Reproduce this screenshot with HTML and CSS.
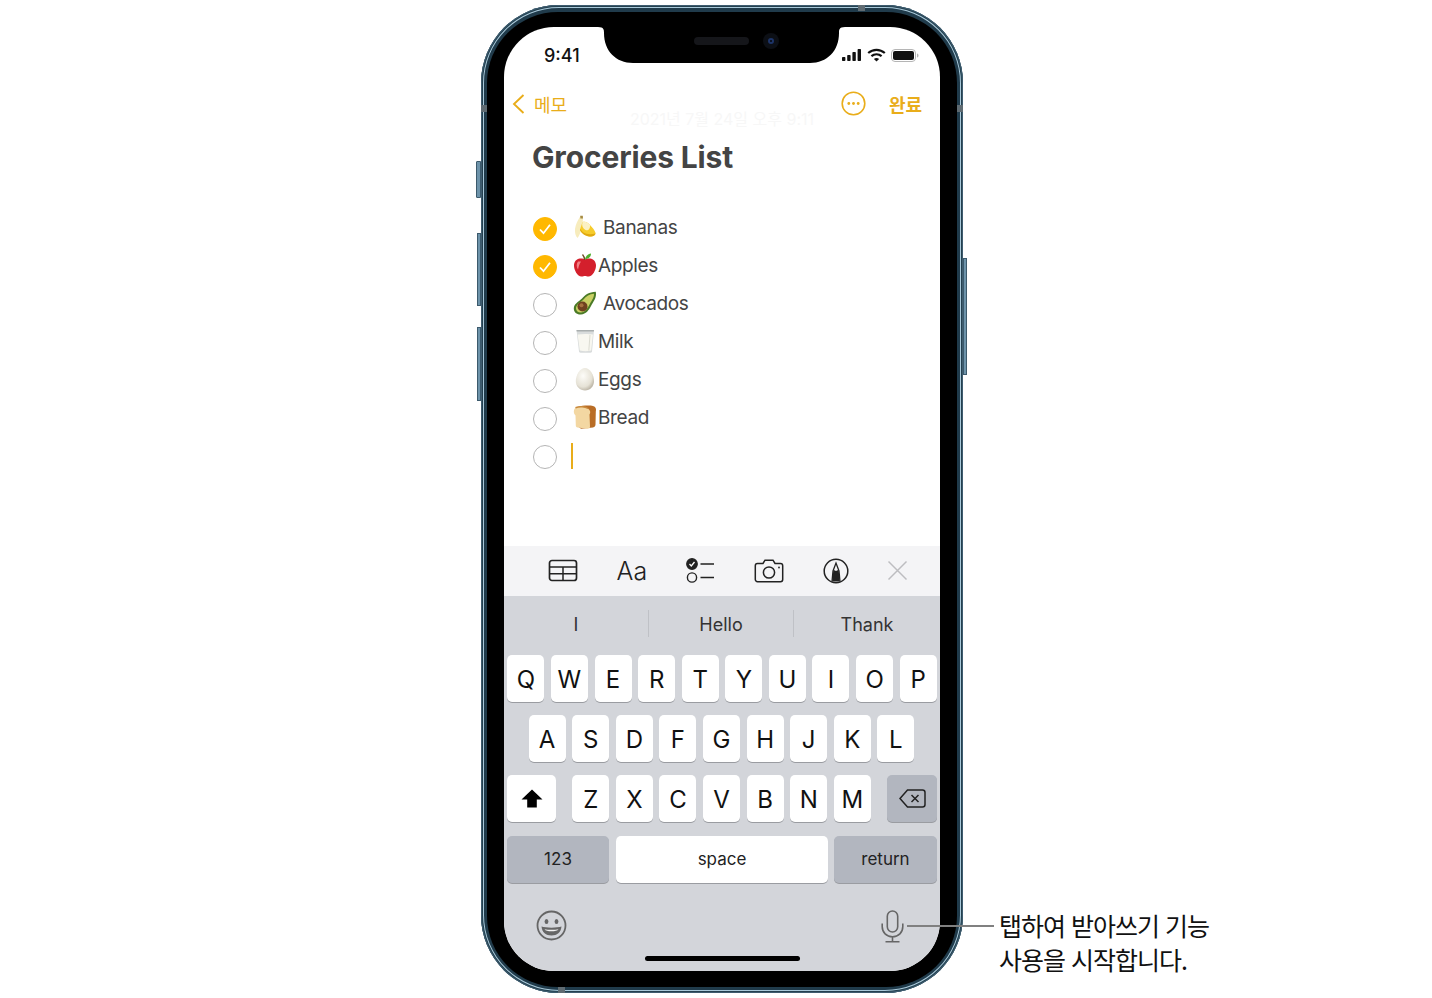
FILE: index.html
```html
<!DOCTYPE html>
<html lang="ko">
<head>
    <title>Groceries List</title>
    <link rel="stylesheet" href="styles.css">
</head>
<body>
<div class="stage">
    <div class="phone">
        <span class="side side-silent"></span>
        <span class="side side-up"></span>
        <span class="side side-down"></span>
        <span class="side side-power"></span>
        <span class="band band-top"></span>
        <span class="band band-bottom"></span>
        <span class="band band-left"></span>
        <span class="band band-right"></span>

        <div class="bezel">
            <div class="screen">
                <svg class="notch" width="247" height="36" viewBox="0 0 247 36">
                    <path d="M0 0H247C241 0 241 3 241 6C241 24 229 36 212 36H35C18 36 6 24 6 6C6 3 6 0 0 0Z" fill="#000"/>
                    <rect x="96" y="10" width="55" height="8" rx="4" fill="#15161a"/>
                    <circle cx="173" cy="14" r="8" fill="#0c0f15"/>
                    <circle cx="173" cy="14" r="3" fill="#1d3468"/>
                    <circle cx="173" cy="14" r="1" fill="#05070c"/>
                </svg>

                <div class="status">
                    <span class="time">9:41</span>
                    <div class="status-icons">
                        <svg width="20" height="12" viewBox="0 0 20 12" fill="#111">
                            <rect x="0" y="8" width="3.4" height="4" rx=".8"/>
                            <rect x="5.2" y="6" width="3.4" height="6" rx=".8"/>
                            <rect x="10.4" y="3" width="3.4" height="9" rx=".8"/>
                            <rect x="15.6" y="0" width="3.4" height="12" rx=".8"/>
                        </svg>
                        <svg width="19" height="14" viewBox="0 0 19 14" fill="none" stroke="#111" stroke-width="2.2">
                            <path d="M1.2 5C6 .7 13 .7 17.8 5"/>
                            <path d="M4.4 8.2C7.4 5.6 11.6 5.6 14.6 8.2"/>
                            <path d="M9.5 13.6L6.9 10.9C8.4 9.7 10.6 9.7 12.1 10.9Z" fill="#111" stroke="none"/>
                        </svg>
                        <svg width="28" height="13" viewBox="0 0 28 13">
                            <rect x=".5" y=".5" width="24" height="12" rx="3.5" fill="none" stroke="#b5b5b5"/>
                            <rect x="2" y="2" width="21" height="9" rx="2" fill="#111"/>
                            <path d="M26 4.5C27 4.8 27.5 5.5 27.5 6.5S27 8.2 26 8.5Z" fill="#b5b5b5"/>
                        </svg>
                    </div>
                </div>

                <div class="nav">
                    <div class="nav-back">
                        <svg width="13" height="20" viewBox="0 0 13 20" fill="none" stroke="#e9ad1a" stroke-width="1.9">
                            <path d="M11.5 1L2 10L11.5 19"/>
                        </svg>
                        <span>메모</span>
                    </div>
                    <div class="nav-actions">
                        <svg width="25" height="25" viewBox="0 0 25 25" fill="none" stroke="#e9ad1a" stroke-width="1.6">
                            <circle cx="12.5" cy="12.5" r="11.3"/>
                            <g fill="#e9ad1a" stroke="none">
                                <circle cx="7.8" cy="12.5" r="1.4"/>
                                <circle cx="12.5" cy="12.5" r="1.4"/>
                                <circle cx="17.2" cy="12.5" r="1.4"/>
                            </g>
                        </svg>
                        <span class="done">완료</span>
                    </div>
                </div>

                <div class="note">
                    <div class="note-date">2021년 7월 24일 오후 9:11</div>
                    <h1>Groceries List</h1>
                    <ul class="checklist">
                        <li>
                            <span class="check on"><svg width="14" height="12" viewBox="0 0 14 12" fill="none" stroke="#fff" stroke-width="1.8"><path d="M2 6.5L5.5 10.2L12 1.8"/></svg></span>
                            <svg class="emoji" viewBox="0 0 24 24">
                                <path d="M7.5 1C5 5 2.5 9 2 14C1.7 18 2.8 21.5 4.5 23C6 21.5 7 18.5 8 15.5C9.5 11 10 6 10 1.5Z" fill="#f7ecbd"/>
                                <path d="M9.5 7C12.5 6 15 7.5 17 10C19.5 12.5 21.5 15 22.5 17.8C22.8 20 20 22 16.5 21.5C12.5 21 8.5 18.5 7 14.5Z" fill="#f6cc2c"/>
                                <path d="M9.5 7C8.5 10.5 9.5 13.5 12.5 15C15 16 17.5 14 17 10C15 7.5 12.5 6 9.5 7Z" fill="#fbf1c4"/>
                                <path d="M7.5 14C9.5 18 14 20.5 22.6 18.5C22 20.5 19.5 22 16.5 21.5C12.5 21 8.5 18.5 7 15Z" fill="#e0a912"/>
                                <path d="M7.2 .8H9.8L10 3.5H7.4Z" fill="#a58a45"/>
                            </svg>
                            <span class="item wide">Bananas</span>
                        </li>
                        <li>
                            <span class="check on"><svg width="14" height="12" viewBox="0 0 14 12" fill="none" stroke="#fff" stroke-width="1.8"><path d="M2 6.5L5.5 10.2L12 1.8"/></svg></span>
                            <svg class="emoji" viewBox="0 0 24 24">
                                <path d="M12 6.5C9 4.5 1.5 4.8 1 12C.8 17 4.5 23.5 8.5 23.5C10 23.5 11 22.9 12 22.9S14 23.5 15.5 23.5C19.5 23.5 23.2 17 23 12C22.5 4.8 15 4.5 12 6.5Z" fill="#d41f2c"/>
                                <path d="M5 8.5C3.3 10.5 3.3 14 5 16.5C5.8 13.5 6.2 11 8 8.5Z" fill="#f17f83"/>
                                <path d="M9.5 1.5C10.8 3 11.5 5 11.8 7" fill="none" stroke="#6e4a22" stroke-width="1.3"/>
                                <path d="M12 6C13 2.5 15.5 .7 18 .5C18 3.5 16 6 12 6Z" fill="#4fae2e"/>
                            </svg>
                            <span class="item">Apples</span>
                        </li>
                        <li>
                            <span class="check"></span>
                            <svg class="emoji" viewBox="0 0 24 24">
                                <path d="M22.8 .8C16 1 12 4 9 7.5C5 11 .8 13 .8 17.5C.8 21.5 4 23.8 8 23.5C13 23.2 16 19 18 15C20 11 24 7 22.8 .8Z" fill="#4a7a26"/>
                                <path d="M21 2.8C16.5 3 13 5.5 10.5 8.5C7 12 3 13.5 3 17.5C3 20 5.5 21.7 8 21.5C12 21.2 14.5 17.5 16.3 14C18 10.5 21.3 7 21 2.8Z" fill="#c9d064"/>
                                <circle cx="9.5" cy="15.5" r="5" fill="#6f4120"/>
                                <circle cx="8.5" cy="14.3" r="2" fill="#a5703f"/>
                            </svg>
                            <span class="item wide">Avocados</span>
                        </li>
                        <li>
                            <span class="check"></span>
                            <svg class="emoji" viewBox="0 0 24 24">
                                <path d="M3.5 1H21L19 22.5C19 23.2 18.5 23.7 17.5 23.7H7.500C6.500 23.7 6 23.2 6 22.5Z" fill="#d9dcdc"/>
                                <path d="M4.600 5.5C9 4.800 15.500 4.800 19.900 5.5L18.200 21.5C14.500 22.5 10.500 22.5 6.800 21.5Z" fill="#f8f7f0"/>
                                <path d="M3.5 1H21L20.800 2.600H3.700Z" fill="#a9aeae"/>
                                <path d="M17 6L15.800 21.5" stroke="#dcdcd2" fill="none"/>
                            </svg>
                            <span class="item">Milk</span>
                        </li>
                        <li>
                            <span class="check"></span>
                            <svg class="emoji" viewBox="0 0 24 24">
                                <defs>
                                    <radialGradient id="eggFill" cx=".4" cy=".35" r=".75">
                                        <stop offset="0" stop-color="#fdfcf8"/>
                                        <stop offset=".65" stop-color="#e6e2d6"/>
                                        <stop offset="1" stop-color="#aca494"/>
                                    </radialGradient>
                                </defs>
                                <path d="M12 1C17 1 21 8 21 14C21 19.5 17 23.5 12 23.5S2.800 19.5 2.800 14C2.800 8 7 1 12 1Z" fill="url(#eggFill)"/>
                            </svg>
                            <span class="item">Eggs</span>
                        </li>
                        <li>
                            <span class="check"></span>
                            <svg class="emoji" viewBox="0 0 24 24">
                                <path d="M5 2C9 .3 17 .3 20 1C22.800 1.700 23.500 4 22.800 6.500L22.500 19.500C22.500 21 21.500 22 20 22.500L8 23.700L3 20Z" fill="#b96d26"/>
                                <path d="M2.500 2.800C6.500 1 12 1.500 15 3.500C17.500 5.300 17.800 7.500 16.500 9.500L17 21.500C17 23 16 23.800 14.500 23.700L4.500 22.500C3.300 22.300 2.800 21.500 2.800 20.500L2.500 10.500C.3 8.500 .3 4.500 2.500 2.800Z" fill="#f3d7a2"/>
                                <path d="M2.500 2.800C6.500 1 12 1.500 15 3.500" fill="none" stroke="#c98a3d" stroke-width="1.500"/>
                            </svg>
                            <span class="item">Bread</span>
                        </li>
                        <li>
                            <span class="check"></span>
                            <span class="caret"></span>
                        </li>
                    </ul>
                </div>

                <div class="toolbar">
                    <span class="tool">
                        <svg width="30" height="23" viewBox="0 0 30 23" fill="none" stroke="#222" stroke-width="1.700">
                            <rect x="1.500" y="1.500" width="27" height="20" rx="2.500"/>
                            <path d="M1.500 8H28.500M1.500 14.800H28.500M15 8V21.500" stroke-width="1.500"/>
                        </svg>
                    </span>
                    <span class="tool tool-text">Aa</span>
                    <span class="tool">
                        <svg width="29" height="25" viewBox="0 0 29 25" fill="none" stroke="#222" stroke-width="1.400">
                            <circle cx="6" cy="6" r="5.200" fill="#222"/>
                            <path d="M3.500 6L5.300 8L8.500 4" stroke="#fff" stroke-width="1.300"/>
                            <circle cx="6" cy="19.500" r="4.600"/>
                            <path d="M14.500 6H28M14.500 19.500H28" stroke-width="1.500"/>
                        </svg>
                    </span>
                    <span class="tool">
                        <svg width="30" height="24" viewBox="0 0 30 24" fill="none" stroke="#222" stroke-width="1.500">
                            <path d="M3.500 4.500H9L11 1.200H19L21 4.500H26.500C27.700 4.500 28.700 5.500 28.700 6.700V20.500C28.700 21.700 27.700 22.700 26.500 22.700H3.500C2.300 22.700 1.300 21.700 1.300 20.500V6.700C1.300 5.500 2.300 4.500 3.500 4.500Z"/>
                            <circle cx="15" cy="13.500" r="5.600"/>
                            <circle cx="25" cy="8.500" r=".9" fill="#222" stroke="none"/>
                        </svg>
                    </span>
                    <span class="tool tool-markup">
                        <svg width="26" height="26" viewBox="0 0 26 26" fill="none" stroke="#222" stroke-width="1.500">
                            <circle cx="13" cy="13" r="11.800"/>
                            <path d="M9 23.500L10 13L13 5L16 13L17 23.500" stroke-width="1.300"/>
                            <path d="M10.300 12.500C11.500 11.800 12 13 13 13S14.500 11.800 15.700 12.500L16.800 23.500H9.200Z" fill="#222" stroke="none"/>
                        </svg>
                    </span>
                    <span class="tool tool-close">
                        <svg width="21" height="21" viewBox="0 0 21 21" fill="none" stroke="#bdbdc0" stroke-width="1.500">
                            <path d="M1.500 1.500L19.500 19.500M19.500 1.500L1.500 19.500"/>
                        </svg>
                    </span>
                </div>

                <div class="keyboard">
                    <div class="suggestions">
                        <span>I</span>
                        <span>Hello</span>
                        <span>Thank</span>
                    </div>
                    <div class="key-row">
                        <span class="key">Q</span><span class="key">W</span><span class="key">E</span><span class="key">R</span><span class="key">T</span><span class="key">Y</span><span class="key">U</span><span class="key">I</span><span class="key">O</span><span class="key">P</span>
                    </div>
                    <div class="key-row key-row-mid">
                        <span class="key">A</span><span class="key">S</span><span class="key">D</span><span class="key">F</span><span class="key">G</span><span class="key">H</span><span class="key">J</span><span class="key">K</span><span class="key">L</span>
                    </div>
                    <div class="key-row key-row-split">
                        <span class="key key-shift">
                            <svg width="22" height="19" viewBox="0 0 22 19" fill="#000"><path d="M11 .5L21.500 10.500H15.800V18.500H6.200V10.500H.5Z"/></svg>
                        </span>
                        <div class="key-group">
                            <span class="key">Z</span><span class="key">X</span><span class="key">C</span><span class="key">V</span><span class="key">B</span><span class="key">N</span><span class="key">M</span>
                        </div>
                        <span class="key key-back key-dark">
                            <svg width="27" height="19" viewBox="0 0 27 19" fill="none" stroke="#222" stroke-width="1.500">
                                <path d="M8.500 1H23.500C25 1 26 2 26 3.500V15.500C26 17 25 18 23.500 18H8.500L1 9.500Z"/>
                                <path d="M12.500 6L19.500 13M19.500 6L12.500 13"/>
                            </svg>
                        </span>
                    </div>
                    <div class="key-row key-row-bottom">
                        <span class="key key-wide key-dark key-label">123</span>
                        <span class="key key-space key-label">space</span>
                        <span class="key key-return key-dark key-label">return</span>
                    </div>
                    <div class="key-foot">
                        <svg width="31" height="31" viewBox="0 0 31 31" fill="none" stroke="#666" stroke-width="1.800">
                            <circle cx="15.500" cy="15.500" r="14"/>
                            <ellipse cx="10.500" cy="11.500" rx="1.900" ry="2.500" fill="#666" stroke="none"/>
                            <ellipse cx="20.500" cy="11.500" rx="1.900" ry="2.500" fill="#666" stroke="none"/>
                            <path d="M5.500 16.500C10 18 21 18 25.500 16.500C25 22.500 21 25.500 15.500 25.500S6 22.500 5.500 16.500Z" fill="#666" stroke="none"/>
                            <path d="M8.500 19.300C12 20 19 20 22.500 19.300C21.500 20.800 19 21.300 15.500 21.300S9.500 20.800 8.500 19.300Z" fill="#f2f2f2" stroke="none"/>
                        </svg>
                        <svg width="23" height="33" viewBox="0 0 23 33" fill="none" stroke="#666" stroke-width="1.600">
                            <rect x="6.300" y="1" width="10.400" height="21" rx="5.200"/>
                            <path d="M1.200 13.500V16.500C1.200 22.500 5.500 26.700 11.500 26.700S21.800 22.500 21.800 16.500V13.500"/>
                            <path d="M11.500 26.700V31.500M4.500 31.800H18.500"/>
                        </svg>
                    </div>
                    <div class="home-bar"></div>
                </div>
            </div>
        </div>
    </div>

    <div class="leader"></div>
    <p class="callout">탭하여 받아쓰기 기능<br>사용을 시작합니다.</p>
</div>
</body>
</html>
```

FILE: styles.css
```css
* {
    box-sizing: border-box;
}
html, body {
    margin: 0;
    background: #fff;
}
body {
    font-family: Inter, "Noto Sans CJK KR", sans-serif;
    overflow: hidden;
}
.stage {
    position: relative;
    width: 1432px;
    height: 998px;
    padding: 5px 0 0 481px;
}

/* phone body */
.phone {
    position: relative;
    width: 482px;
    height: 988px;
    padding: 7px 6px 6px;
    border-radius: 78px;
    background: #203b4b;
    box-shadow: inset 0 0 0 1px #3f5d70, inset 0 0 0 2px #24404f, inset 0 0 0 3px #a9c9da;
}
.side {
    position: absolute;
    background: #6d93aa;
    border: 1px solid #3c5a6c;
}
.side-silent {
    left: -5px;
    top: 156px;
    width: 5px;
    height: 37px;
    border-radius: 1px 0 0 1px;
}
.side-up {
    left: -4px;
    top: 228px;
    width: 4px;
    height: 73px;
}
.side-down {
    left: -4px;
    top: 322px;
    width: 4px;
    height: 74px;
}
.side-power {
    right: -4px;
    top: 253px;
    width: 4px;
    height: 117px;
}
.band {
    position: absolute;
    background: #5f6b72;
}
.band-top {
    top: 0;
    right: 98px;
    width: 7px;
    height: 6px;
}
.band-bottom {
    bottom: 0;
    left: 77px;
    width: 7px;
    height: 6px;
}
.band-left {
    left: 0;
    top: 100px;
    width: 6px;
    height: 7px;
}
.band-right {
    right: 0;
    top: 100px;
    width: 6px;
    height: 7px;
}
.bezel {
    height: 100%;
    padding: 15px 17px 16px;
    border-radius: 71px;
    background: #000;
}
.screen {
    position: relative;
    height: 944px;
    border-radius: 50px;
    background: #fff;
    overflow: hidden;
    display: flex;
    flex-direction: column;
}
.notch {
    position: absolute;
    left: 94px;
    top: 0;
}

/* status bar and nav */
.status {
    height: 55px;
    padding: 18px 21px 0 40px;
    display: flex;
    justify-content: space-between;
    align-items: flex-start;
}
.time {
    font-size: 18px;
    font-weight: 500;
    line-height: 22px;
    color: #111;
}
.status-icons {
    display: flex;
    align-items: center;
    gap: 5px;
    padding-top: 3px;
}
.nav {
    height: 44px;
    padding: 0 18px 1px 8px;
    display: flex;
    justify-content: space-between;
    align-items: center;
    color: #e9ad1a;
    font-size: 18px;
}
.nav-back {
    display: flex;
    align-items: center;
    gap: 9px;
}
.nav-actions {
    display: flex;
    align-items: center;
    gap: 23px;
}
.done {
    font-size: 18px;
    font-weight: 700;
}

/* note body */
.note {
    flex: 1;
    position: relative;
    padding: 0 0 0 28px;
}
.note-date {
    position: absolute;
    left: 0;
    right: 0;
    top: -16px;
    text-align: center;
    font-size: 16px;
    line-height: 18px;
    color: #f7f7f7;
}
.note h1 {
    margin: 11px 0 0;
    font-size: 30px;
    line-height: 40px;
    font-weight: 700;
    letter-spacing: -0.15px;
    color: #444;
}
.checklist {
    list-style: none;
    margin: 32px 0 0;
    padding: 0 0 0 1px;
}
.checklist li {
    height: 38px;
    display: flex;
    align-items: center;
}
.check {
    flex: none;
    width: 24px;
    height: 24px;
    margin-top: 2px;
    border-radius: 50%;
    border: 1.5px solid #b5b5b5;
    display: flex;
    align-items: center;
    justify-content: center;
}
.check.on {
    background: #ffb800;
    border-color: #ffb800;
}
.emoji {
    flex: none;
    width: 24px;
    height: 24px;
    margin: 0 0 2px 16px;
}
.item {
    margin-left: 1px;
    font-size: 19px;
    line-height: 24px;
    letter-spacing: -0.35px;
    color: #444;
}
.item.wide {
    margin-left: 6px;
}
.caret {
    width: 2px;
    height: 26px;
    margin: 0 0 0 14px;
    background: #e9ad1a;
}

/* formatting bar */
.toolbar {
    height: 50px;
    padding: 0 0 1px 25px;
    background: #f4f4f6;
    display: flex;
    align-items: center;
}
.tool {
    width: 68.6px;
    display: flex;
    align-items: center;
    justify-content: center;
}
.tool-text {
    font-size: 25px;
    font-weight: 300;
    color: #222;
}
.tool-markup {
    margin-left: -2px;
}
.tool-close {
    margin-left: -7px;
}

/* keyboard */
.keyboard {
    height: 375px;
    background: #d3d5da;
    position: relative;
}
.suggestions {
    height: 59px;
    padding: 14px 0 18px;
    display: grid;
    grid-template-columns: 144px 145px 147px;
    font-size: 18px;
    color: #333;
}
.suggestions span {
    display: flex;
    align-items: center;
    justify-content: center;
    padding-top: 2px;
}
.suggestions span + span {
    border-left: 1px solid #bfc1c6;
}
.key-row {
    height: 47px;
    margin-bottom: 13px;
    padding: 0 3px;
    display: flex;
    justify-content: center;
    gap: 6.6px;
}
.key-row-mid {
    padding: 0 4px 0 3px;
}
.key-row-split {
    justify-content: space-between;
    height: 48px;
    margin-bottom: 13px;
}
.key-group {
    display: flex;
    gap: 6.6px;
}
.key {
    flex: none;
    width: 37px;
    height: 47px;
    padding-top: 2px;
    border-radius: 5px;
    background: #fff;
    box-shadow: 0 1px 0 #9a9ca1;
    display: flex;
    align-items: center;
    justify-content: center;
    font-size: 24px;
    color: #111;
}
.key-shift {
    width: 49px;
    padding-top: 0;
}
.key-back {
    width: 50px;
    padding-top: 0;
}
.key-dark {
    background: #b2b6bf;
}
.key-row-bottom {
    justify-content: flex-start;
    gap: 7px;
    margin-bottom: 0;
}
.key-wide {
    width: 102px;
}
.key-space {
    width: 212px;
}
.key-return {
    width: 102px;
    margin-left: -1px;
    flex-grow: 1;
}
.key-label {
    padding: 0 0 1px;
    font-size: 17px;
    color: #222;
}
.key-foot {
    height: 87px;
    padding: 27px 36px 0 32px;
    display: flex;
    justify-content: space-between;
    align-items: flex-start;
}
.home-bar {
    position: absolute;
    left: 141px;
    bottom: 10px;
    width: 155px;
    height: 5px;
    border-radius: 3px;
    background: #000;
}

/* callout */
.leader {
    position: absolute;
    left: 907px;
    top: 925px;
    width: 87px;
    height: 2px;
    background: #808080;
}
.callout {
    position: absolute;
    left: 999px;
    top: 908px;
    margin: 0;
    font-family: "Noto Sans CJK KR", sans-serif;
    font-size: 25px;
    line-height: 34px;
    letter-spacing: -1px;
    color: #111;
    white-space: nowrap;
}
```
